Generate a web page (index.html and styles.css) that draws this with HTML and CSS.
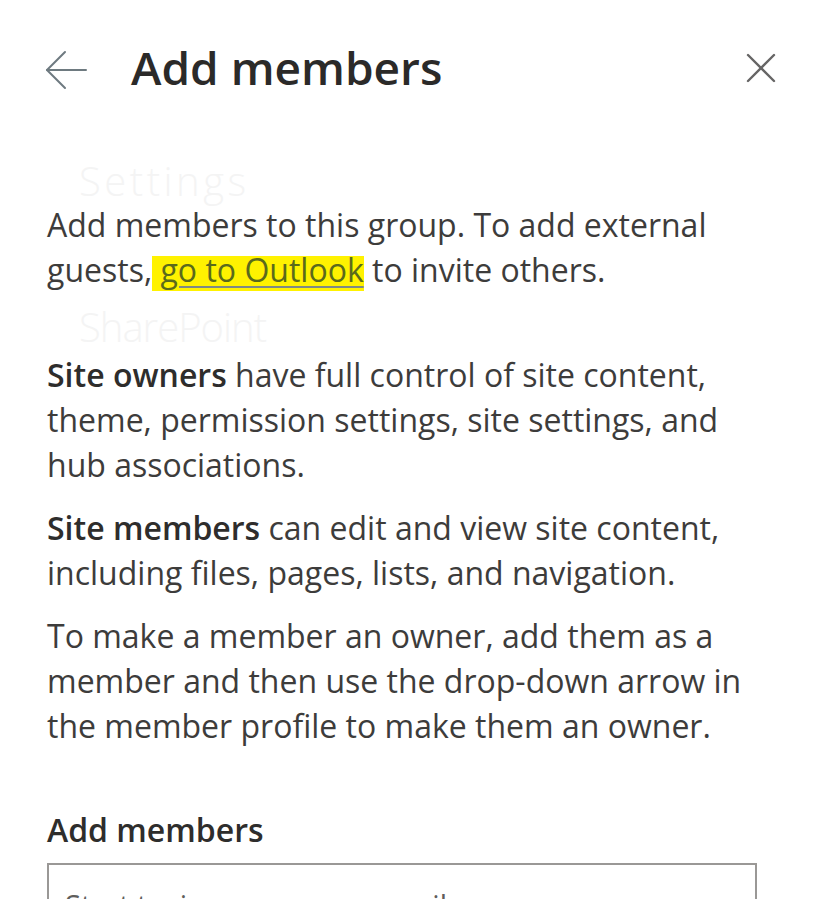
FILE: index.html
```html
<!DOCTYPE html>
<html lang="en">
<head>
<meta charset="utf-8">
<title>Add members</title>
<link rel="stylesheet" href="styles.css">
</head>
<body>
<div class="panel">
  <div class="ghost ghost-settings">Settings</div>
  <div class="ghost ghost-sharepoint">SharePoint</div>
  <header class="head">
    <button class="icon-btn back" aria-label="Back">
      <svg width="42" height="40" viewBox="0 0 42 40" fill="none" stroke="#6e7a80" stroke-width="2" stroke-linecap="round" stroke-linejoin="round">
        <path d="M41 20H2"/>
        <path d="M20 2L2 20L20 38"/>
      </svg>
    </button>
    <h1 class="title">Add members</h1>
    <button class="icon-btn close" aria-label="Close">
      <svg width="30" height="30" viewBox="0 0 30 30" fill="none" stroke="#666565" stroke-width="2.4" stroke-linecap="round">
        <path d="M2 2L28 28"/>
        <path d="M28 2L2 28"/>
      </svg>
    </button>
  </header>
  <div class="content">
    <p class="intro">Add members to this group. To add external guests,<span class="hl"> <a class="link" href="#">go to Outlook</a></span> to invite others.</p>
    <p><strong>Site owners</strong> have full control of site content, theme, permission settings, site settings, and hub associations.</p>
    <p><strong>Site members</strong> can edit and view site content, including files, pages, lists, and navigation.</p>
    <p>To make a member an owner, add them as a member and then use the drop-down arrow in the member profile to make them an owner.</p>
    <div class="label">Add members</div>
    <div class="picker">
      <span class="placeholder">Start typing a name or email</span>
    </div>
  </div>
</div>
</body>
</html>
```

FILE: styles.css
```css
* { box-sizing: border-box; }

body {
  margin: 0;
  background: #ffffff;
  font-family: "Open Sans", "Noto Sans", sans-serif;
  color: #3d3c3b;
}

.panel {
  position: relative;
  height: 899px;
  overflow: hidden;
}

.ghost {
  position: absolute;
  left: 79px;
  font-size: 40px;
  font-weight: 300;
  color: #f4f4f4;
  line-height: 40px;
  z-index: 0;
}
.ghost-settings { top: 161px; letter-spacing: 3.5px; }
.ghost-sharepoint { top: 307px; letter-spacing: -1px; }

.head {
  position: relative;
  display: flex;
  align-items: center;
  height: 99px;
  padding: 36px 45px 0 45px;
}

.icon-btn {
  border: 0;
  background: none;
  padding: 0;
  display: flex;
  cursor: pointer;
}

.back {
  margin-right: 44px;
  margin-top: 4px;
}

.title {
  margin: 0;
  font-size: 46px;
  font-weight: 600;
  line-height: 63px;
  color: #2b2a29;
}

.close {
  margin-left: auto;
}

.content {
  position: relative;
  padding: 103px 64px 0 47px;
  font-size: 32px;
  line-height: 45px;
}

.content p {
  margin: 0 0 18px;
}

.content p.intro {
  margin-bottom: 60px;
}

.content strong {
  font-weight: 600;
  color: #2e2d2c;
}

.hl {
  background: linear-gradient(#fff200, #fff200) no-repeat left bottom / 100% 35px;
}

.link {
  color: #5a6a1c;
  text-decoration: underline;
  text-decoration-color: #7d8a86;
  text-decoration-thickness: 2px;
  text-underline-offset: 4px;
}

.label {
  margin-top: 59px;
  margin-bottom: 11px;
  font-size: 32px;
  font-weight: 600;
  line-height: 45px;
  color: #2e2d2c;
}

.picker {
  height: 72px;
  border: 2px solid #9a9896;
  padding: 17px 16px 0;
  font-size: 29px;
}

.placeholder {
  color: #605e5c;
}
```
